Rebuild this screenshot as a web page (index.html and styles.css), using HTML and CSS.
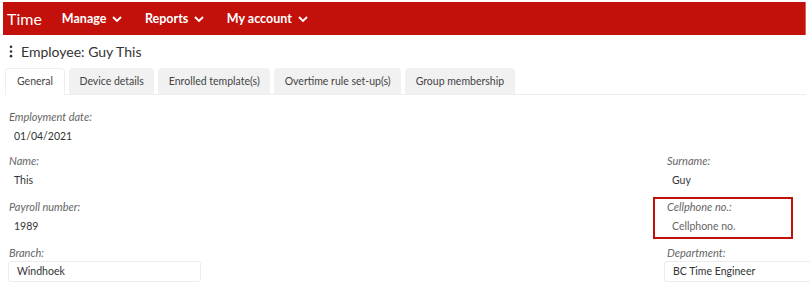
FILE: index.html
```html
<!DOCTYPE html>
<html lang="en">
<head>
    <meta charset="UTF-8">
    <title>Employee: Guy This</title>
    <link rel="stylesheet" href="styles.css">
</head>
<body>
    <header class="topbar">
        <span class="brand">Time</span>
        <nav class="menu">
            <span class="menu-item">Manage <svg class="chev" viewBox="0 0 10 6"><path d="M1 1l4 4 4-4"/></svg></span>
            <span class="menu-item">Reports <svg class="chev" viewBox="0 0 10 6"><path d="M1 1l4 4 4-4"/></svg></span>
            <span class="menu-item">My account <svg class="chev" viewBox="0 0 10 6"><path d="M1 1l4 4 4-4"/></svg></span>
        </nav>
    </header>

    <div class="title">
        <svg class="kebab" viewBox="0 0 4 14"><circle cx="2" cy="2" r="1.4"/><circle cx="2" cy="7" r="1.4"/><circle cx="2" cy="12" r="1.4"/></svg>
        <h1>Employee: Guy This</h1>
    </div>

    <div class="tabs">
        <div class="tab active">General</div>
        <div class="tab">Device details</div>
        <div class="tab">Enrolled template(s)</div>
        <div class="tab">Overtime rule set-up(s)</div>
        <div class="tab">Group membership</div>
    </div>

    <div class="form">
        <div class="field left">
            <div class="label">Employment date:</div>
            <div class="value">01/04/2021</div>
        </div>
        <div class="field right"></div>

        <div class="field left">
            <div class="label">Name:</div>
            <div class="value">This</div>
        </div>
        <div class="field right">
            <div class="label">Surname:</div>
            <div class="value">Guy</div>
        </div>

        <div class="field left">
            <div class="label">Payroll number:</div>
            <div class="value">1989</div>
        </div>
        <div class="field right highlight">
            <div class="label">Cellphone no.:</div>
            <div class="value placeholder">Cellphone no.</div>
        </div>

        <div class="field left">
            <div class="label">Branch:</div>
            <div class="input branch">Windhoek</div>
        </div>
        <div class="field right">
            <div class="label">Department:</div>
            <div class="input dept">BC Time Engineer</div>
        </div>
    </div>
</body>
</html>
```

FILE: styles.css
```css
* {
    margin: 0;
    padding: 0;
    box-sizing: border-box;
}

body {
    font-family: Lato, 'Open Sans', sans-serif;
    background: #fff;
    color: #333;
    width: 810px;
    overflow: hidden;
}

.topbar {
    margin: 2px 4px 0 3px;
    height: 33px;
    background: #c4100b;
    color: #fff;
    display: flex;
    align-items: center;
    padding-left: 4px;
    border-right: 1px solid #e0625e;
}

.brand {
    font-size: 16px;
    margin-right: 20px;
}

.menu {
    display: flex;
    gap: 22.5px;
}

.menu-item {
    font-size: 12.5px;
    font-weight: bold;
    display: flex;
    align-items: center;
    gap: 6px;
}

.chev {
    width: 10px;
    height: 6px;
    fill: none;
    stroke: #fff;
    stroke-width: 1.8;
}

.title {
    display: flex;
    align-items: center;
    height: 30px;
    margin-top: 1px;
    padding-left: 9px;
}

.kebab {
    width: 4px;
    height: 13px;
    fill: #333;
    margin-right: 8px;
}

.title h1 {
    font-size: 14px;
    font-weight: normal;
    color: #333;
}

.tabs {
    display: flex;
    gap: 4px;
    margin: 2px 4px 0 5px;
    border-bottom: 1px solid #eee;
    height: 27px;
}

.tab {
    font-size: 10.5px;
    color: #444;
    background: #f1f1f1;
    border-radius: 4px 4px 0 0;
    padding: 0 10.5px;
    height: 26px;
    line-height: 26px;
}

.tab.active {
    background: #fff;
    border: 1px solid #eee;
    border-bottom: none;
    height: 27px;
    padding: 0 11px;
    line-height: 25px;
}

.form {
    display: grid;
    grid-template-columns: 653px 1fr;
    grid-template-rows: 44px 46px 46px 46px;
    margin-top: 15px;
}

.field {
    font-size: 10.5px;
}

.field.left {
    padding-left: 9px;
}

.field.right {
    padding-left: 14px;
}

.label {
    font-style: italic;
    color: #666;
    font-size: 11px;
    height: 14px;
    line-height: 14px;
}

.value {
    margin-top: 5px;
    padding-left: 5px;
    color: #333;
    line-height: 15px;
}

.value.placeholder {
    color: #666;
}

.highlight {
    border: 2px solid #c4100b;
    width: 140px;
    height: 42px;
    margin-top: -3px;
    padding: 1px 0 0 12px !important;
}

.input {
    margin-top: 1px;
    height: 21px;
    line-height: 19px;
    border: 1px solid #ececec;
    border-radius: 3px;
    padding-left: 8px;
    color: #333;
}

.input.branch {
    margin-left: -1px;
    width: 193px;
}

.input.dept {
    margin-left: -3px;
    width: 150px;
    border-right: none;
}
```
